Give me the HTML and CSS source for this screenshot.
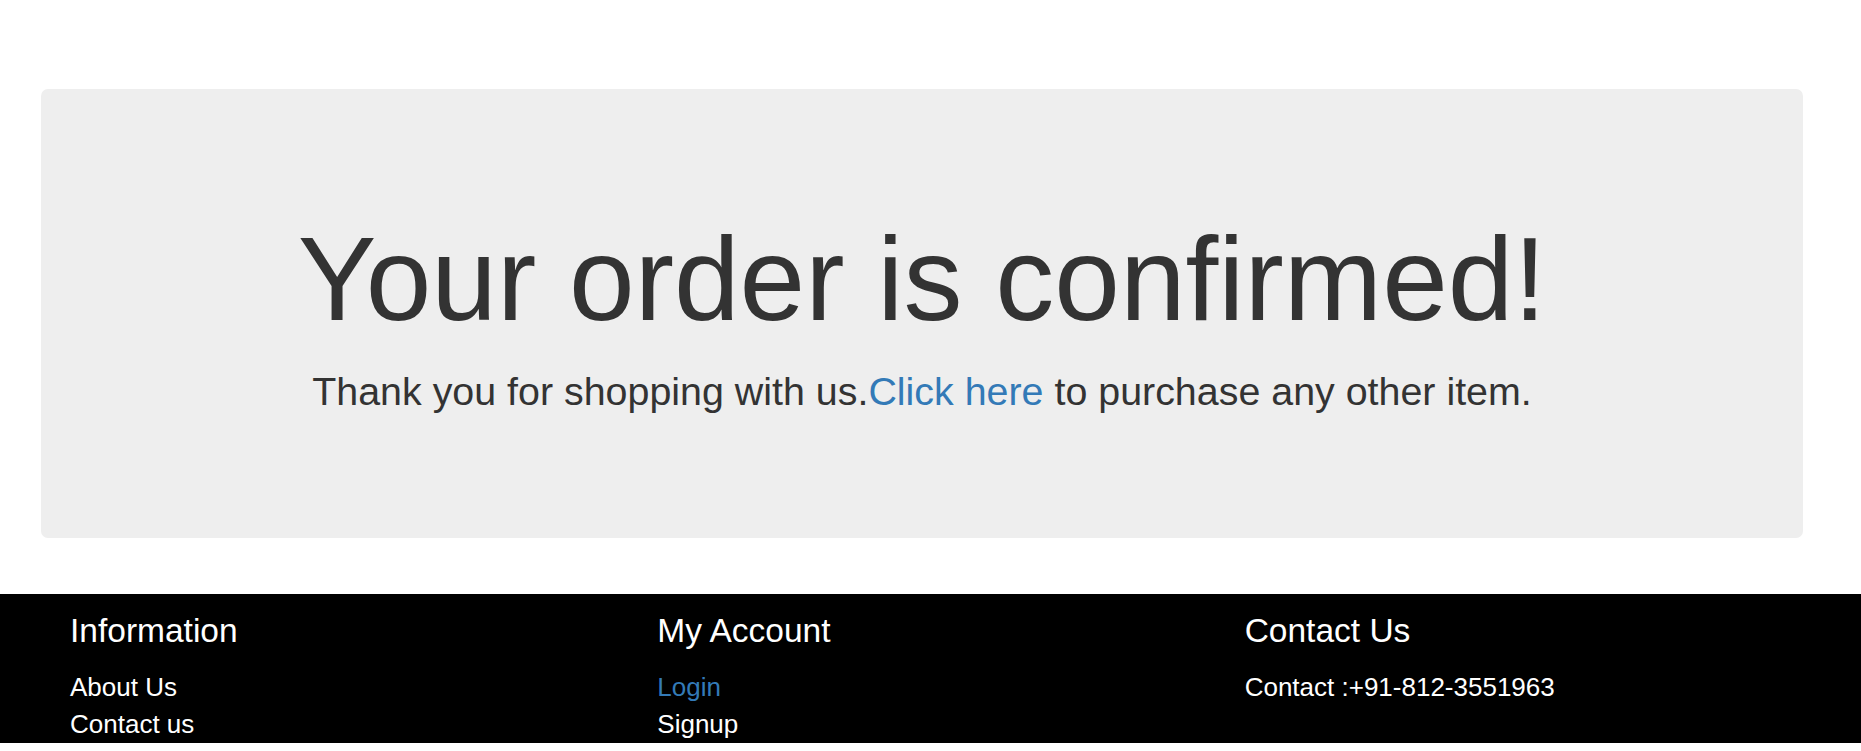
FILE: index.html
```html
<!DOCTYPE html>
<html lang="en">
<head>
<meta charset="utf-8">
<title>Order confirmed</title>
<link rel="stylesheet" href="styles.css">
</head>
<body>
<main class="page">
  <section class="jumbotron">
    <h1 class="jumbo-title">Your order is confirmed!</h1>
    <p class="jumbo-text">Thank you for shopping with us.<a class="link" href="#">Click here</a> to purchase any other item.</p>
  </section>
</main>
<footer class="footer">
  <div class="footer-row">
    <div class="footer-col">
      <h4 class="footer-title">Information</h4>
      <a class="footer-link" href="#">About Us</a>
      <a class="footer-link" href="#">Contact us</a>
    </div>
    <div class="footer-col">
      <h4 class="footer-title">My Account</h4>
      <a class="footer-link footer-link-active" href="#">Login</a>
      <a class="footer-link" href="#">Signup</a>
    </div>
    <div class="footer-col">
      <h4 class="footer-title">Contact Us</h4>
      <p class="footer-text">Contact :+91-812-3551963</p>
    </div>
  </div>
</footer>
</body>
</html>
```

FILE: styles.css
```css
* { box-sizing: border-box; }
html, body { margin: 0; padding: 0; }
body {
  font-family: "Liberation Sans", Arial, sans-serif;
  color: #333;
  background: #fff;
  padding-bottom: 8px;
}
.page {
  padding: 89px 58px 0 41px;
}
.jumbotron {
  background: #eee;
  border-radius: 7px;
  height: 449px;
  padding-top: 126px;
  text-align: center;
}
.jumbo-title {
  margin: 0;
  font-size: 118px;
  font-weight: 400;
  line-height: 1.1;
  color: #333;
}
.jumbo-text {
  margin: 18px 0 0;
  font-size: 39.4px;
  line-height: 1.42857;
  color: #333;
}
.link {
  color: #337ab7;
  text-decoration: none;
}
.footer {
  background: #000;
  margin-top: 56px;
  height: 149px;
  padding: 19px 58px 0 41px;
  color: #fff;
}
.footer-row {
  display: grid;
  grid-template-columns: repeat(3, 1fr);
}
.footer-col {
  padding: 0 29px;
  display: flex;
  flex-direction: column;
}
.footer-title {
  margin: 0 0 19.5px;
  font-size: 33.5px;
  font-weight: 400;
  line-height: 1.1;
  color: #fff;
}
.footer-link, .footer-text {
  font-size: 26px;
  line-height: 1.42857;
  color: #fff;
  text-decoration: none;
  margin: 0;
}
.footer-link-active {
  color: #337ab7;
}
```
